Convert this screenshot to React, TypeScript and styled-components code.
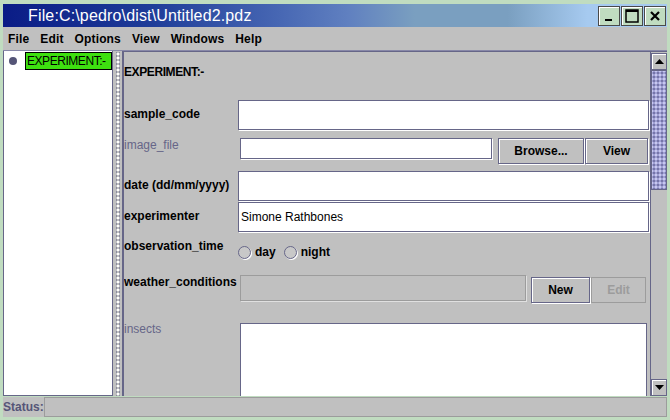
import React from "react";
import styled, { createGlobalStyle } from "styled-components";

const GlobalStyle = createGlobalStyle`
  html, body {
    margin: 0;
    padding: 0;
    overflow: hidden;
  }
  * {
    box-sizing: border-box;
  }
`;

const DARK = "#666688";
const GRAY = "#c0c0c0";
const FRAME = "#c0dcc0";

const Frame = styled.div`
  width: 670px;
  height: 420px;
  background: ${FRAME};
  padding: 4px 3px 3px 3px;
  display: flex;
  flex-direction: column;
  font-family: "Liberation Sans", Arial, sans-serif;
  font-size: 12px;
  color: #000;
`;

const TitleBar = styled.div`
  height: 23px;
  flex: none;
  display: flex;
  align-items: center;
  padding-left: 25px;
  padding-right: 1px;
  background: linear-gradient(
    90deg,
    #0a1c86 0%,
    #1e3c98 22%,
    #4868b4 42%,
    #6080c0 52%,
    #7a9fc0 62%,
    #7a9fc0 76%,
    #a6caf0 88%,
    #a6caf0 100%
  );
`;

const TitleText = styled.div`
  flex: 1;
  color: #fff;
  font-size: 16px;
  line-height: 18px;
  letter-spacing: 0.15px;
`;

const TitleButtons = styled.div`
  display: flex;
  gap: 1px;
`;

const TitleButton = styled.div`
  width: 22px;
  height: 20px;
  background: ${FRAME};
  border: 1px solid #4a4a4a;
  box-shadow: inset 1px 1px 0 #fff;
  display: flex;
  align-items: center;
  justify-content: center;
`;

const MenuBar = styled.div`
  height: 23px;
  flex: none;
  background: ${GRAY};
  display: flex;
  align-items: center;
`;

const MenuItem = styled.div`
  font-weight: bold;
  padding: 0 5px;
  margin-right: 1px;
  letter-spacing: 0.15px;
`;

const Body = styled.div`
  flex: 1;
  display: flex;
  background: ${GRAY};
  border-top: 1px solid #8888a8;
  min-height: 0;
`;

const TreePane = styled.div`
  width: 110px;
  flex: none;
  background: #fff;
  border: 1px solid ${DARK};
  border-top: none;
  padding: 1px 0 0 0;
`;

const TreeNode = styled.div`
  display: flex;
  align-items: center;
  height: 18px;
`;

const NodeDot = styled.div`
  width: 8px;
  height: 8px;
  border-radius: 50%;
  background: #555577;
  margin: 0 8px 0 5px;
`;

const NodeLabel = styled.div`
  flex: 1;
  height: 18px;
  background: #3ee010;
  border: 1px solid #000;
  padding-left: 1px;
  line-height: 16px;
  font-size: 12px;
  letter-spacing: -0.45px;
  white-space: nowrap;
  overflow: hidden;
`;

const Splitter = styled.div`
  width: 9px;
  flex: none;
  display: flex;
  justify-content: center;
  padding-top: 1px;
  &::before {
    content: "";
    width: 4px;
    height: 100%;
    background-image: radial-gradient(circle, #ffffff 0.8px, transparent 1px),
      radial-gradient(circle, #8a8aa0 0.8px, transparent 1px);
    background-size: 4px 4px, 4px 4px;
    background-position: 0 0, 2px 2px;
  }
`;

const ScrollPane = styled.div`
  flex: 1;
  display: flex;
  border-left: 2px solid ${DARK};
  border-top: 1px solid ${DARK};
  min-width: 0;
`;

const FormArea = styled.div`
  flex: 1;
  overflow: hidden;
  display: flex;
  flex-direction: column;
`;

const Row = styled.div<{ $mt: number; $h?: number }>`
  display: flex;
  align-items: flex-start;
  margin-top: ${(p) => p.$mt}px;
  height: ${(p) => (p.$h ? `${p.$h}px` : "auto")};
  flex: none;
`;

const Label = styled.div<{ $muted?: boolean; $pt?: number }>`
  width: 114px;
  flex: none;
  padding-top: ${(p) => p.$pt ?? 0}px;
  line-height: 14px;
  font-weight: ${(p) => (p.$muted ? "normal" : "bold")};
  color: ${(p) => (p.$muted ? "#666688" : "#000")};
  white-space: nowrap;
`;

const HeaderLabel = styled.div`
  margin-top: 13px;
  line-height: 14px;
  font-weight: bold;
  letter-spacing: -0.4px;
`;

const TextField = styled.div<{ $h: number; $ml?: number; $mr?: number }>`
  flex: 1;
  height: ${(p) => p.$h}px;
  margin-left: ${(p) => p.$ml ?? 0}px;
  margin-right: ${(p) => p.$mr ?? 1}px;
  background: #fff;
  border: 1px solid ${DARK};
  box-shadow: 1px 1px 0 #fff;
  padding-left: 2px;
  display: flex;
  align-items: center;
  font-size: 12px;
`;

const DisabledBox = styled.div`
  width: 286px;
  height: 26px;
  margin-left: 2px;
  border: 1px solid #9c9c9c;
  box-shadow: 1px 1px 0 #e0e0e0;
`;

const Button = styled.div<{ $w: number; $ml?: number; $mt?: number; $disabled?: boolean }>`
  width: ${(p) => p.$w}px;
  height: 26px;
  margin-left: ${(p) => p.$ml ?? 0}px;
  margin-top: ${(p) => p.$mt ?? 0}px;
  flex: none;
  border: 1px solid ${(p) => (p.$disabled ? "#9c9c9c" : DARK)};
  box-shadow: ${(p) =>
    p.$disabled ? "none" : "inset 1px 1px 0 #fff, 1px 1px 0 #fff"};
  display: flex;
  align-items: center;
  justify-content: center;
  font-weight: bold;
  color: ${(p) => (p.$disabled ? "#9c9c9c" : "#000")};
`;

const RadioGroup = styled.div`
  display: flex;
  align-items: center;
  padding-top: 6px;
  font-weight: bold;
`;

const Radio = styled.div<{ $ml?: number }>`
  width: 13px;
  height: 13px;
  border-radius: 50%;
  border: 1px solid ${DARK};
  background: #c8c8c8;
  box-shadow: 1px 1px 0 #fff;
  margin-left: ${(p) => p.$ml ?? 0}px;
  margin-right: 4px;
`;

const TextArea = styled.div`
  flex: 1;
  height: 80px;
  margin-top: 1px;
  margin-left: 2px;
  margin-right: 3px;
  background: #fff;
  border: 1px solid ${DARK};
`;

const Spacer = styled.div<{ $w: number }>`
  width: ${(p) => p.$w}px;
  flex: none;
`;

const ScrollBar = styled.div`
  width: 17px;
  flex: none;
  display: flex;
  flex-direction: column;
  border-left: 1px solid ${DARK};
  padding-top: 1px;
`;

const ArrowButton = styled.div`
  height: 17px;
  flex: none;
  border: 1px solid ${DARK};
  box-shadow: inset 1px 1px 0 #fff;
  display: flex;
  align-items: center;
  justify-content: center;
`;

const Thumb = styled.div`
  height: 120px;
  flex: none;
  background-color: #a0a0d4;
  background-image: radial-gradient(circle, #7474a8 0.7px, transparent 1px),
    radial-gradient(circle, #c8c8f0 0.7px, transparent 1px);
  background-size: 4px 4px, 4px 4px;
  background-position: 0 0, 2px 2px;
  border: 1px solid ${DARK};
`;

const Track = styled.div`
  flex: 1;
`;

const StatusBar = styled.div`
  height: 20px;
  flex: none;
  margin-top: 1px;
  background: ${GRAY};
  display: flex;
  align-items: center;
`;

const StatusLabel = styled.div`
  font-weight: bold;
  color: #555577;
  width: 41px;
`;

const StatusField = styled.div`
  flex: 1;
  height: 20px;
  border: 1px solid #9c9c9c;
`;

const Arrow = ({ down }: { down?: boolean }) => (
  <svg width="9" height="5" viewBox="0 0 9 5">
    <path d={down ? "M0 0 H9 L4.5 5 Z" : "M0 5 H9 L4.5 0 Z"} fill="#000" />
  </svg>
);

const menuItems = ["File", "Edit", "Options", "View", "Windows", "Help"];

const App = () => {
  return (
    <>
      <GlobalStyle />
      <Frame>
        <TitleBar>
          <TitleText>File:C:\pedro\dist\Untitled2.pdz</TitleText>
          <TitleButtons>
            <TitleButton>
              <svg width="12" height="12" viewBox="0 0 12 12">
                <rect x="2" y="9" width="7" height="2" fill="#000" />
              </svg>
            </TitleButton>
            <TitleButton>
              <svg width="14" height="14" viewBox="0 0 14 14">
                <rect x="1" y="1" width="12" height="12" fill="none" stroke="#000" strokeWidth="1.5" />
                <rect x="1" y="1" width="12" height="2" fill="#000" />
              </svg>
            </TitleButton>
            <TitleButton>
              <svg width="12" height="12" viewBox="0 0 12 12">
                <path d="M2 2 L10 10 M10 2 L2 10" stroke="#000" strokeWidth="2.2" />
              </svg>
            </TitleButton>
          </TitleButtons>
        </TitleBar>

        <MenuBar>
          {menuItems.map((m) => (
            <MenuItem key={m}>{m}</MenuItem>
          ))}
        </MenuBar>

        <Body>
          <TreePane>
            <TreeNode>
              <NodeDot />
              <NodeLabel>EXPERIMENT:-</NodeLabel>
            </TreeNode>
          </TreePane>
          <Splitter />
          <ScrollPane>
            <FormArea>
              <HeaderLabel>EXPERIMENT:-</HeaderLabel>

              <Row $mt={21} $h={30}>
                <Label $pt={7}>sample_code</Label>
                <TextField $h={30} />
              </Row>

              <Row $mt={8}>
                <Label $muted>image_file</Label>
                <TextField $h={21} $ml={2} />
                <Button $w={86} $ml={5}>Browse...</Button>
                <Button $w={63} $ml={1}>View</Button>
                <Spacer $w={2} />
              </Row>

              <Row $mt={7} $h={30}>
                <Label $pt={7}>date (dd/mm/yyyy)</Label>
                <TextField $h={30} />
              </Row>

              <Row $mt={1} $h={30}>
                <Label $pt={7}>experimenter</Label>
                <TextField $h={30}>Simone Rathbones</TextField>
              </Row>

              <Row $mt={7} $h={20}>
                <Label>observation_time</Label>
                <RadioGroup>
                  <Radio />
                  day
                  <Radio $ml={8} />
                  night
                </RadioGroup>
              </Row>

              <Row $mt={16}>
                <Label>weather_conditions</Label>
                <DisabledBox />
                <Button $w={59} $ml={5} $mt={2}>New</Button>
                <Button $w={55} $ml={1} $mt={2} $disabled>Edit</Button>
              </Row>

              <Row $mt={19}>
                <Label $muted>insects</Label>
                <TextArea />
              </Row>
            </FormArea>
            <ScrollBar>
              <ArrowButton>
                <Arrow />
              </ArrowButton>
              <Thumb />
              <Track />
              <ArrowButton>
                <Arrow down />
              </ArrowButton>
            </ScrollBar>
          </ScrollPane>
        </Body>

        <StatusBar>
          <StatusLabel>Status:</StatusLabel>
          <StatusField />
        </StatusBar>
      </Frame>
    </>
  );
};

export default App;
